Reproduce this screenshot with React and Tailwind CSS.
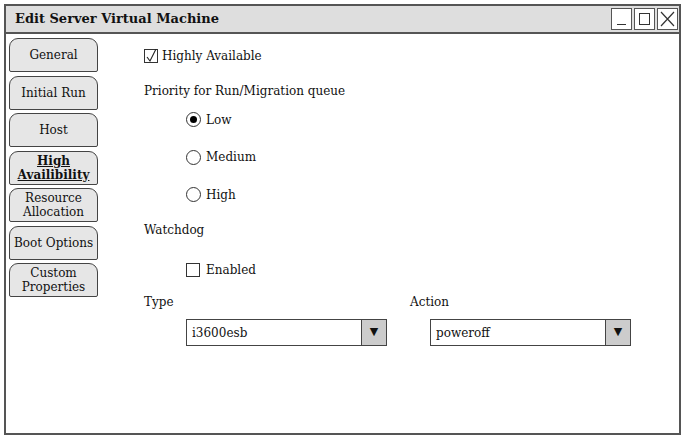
const tabs = [
  ['General'],
  ['Initial Run'],
  ['Host'],
  ['High', 'Availibility'],
  ['Resource', 'Allocation'],
  ['Boot Options'],
  ['Custom', 'Properties'],
];

function Radio({ checked, label }) {
  return (
    <div className="flex items-center gap-[5px] h-[15px]">
      <span className="w-[15px] h-[15px] rounded-full border border-[#333] flex items-center justify-center bg-white">
        {checked && <span className="w-[7px] h-[7px] rounded-full bg-black" />}
      </span>
      <span>{label}</span>
    </div>
  );
}

function Select({ value }) {
  return (
    <div className="flex w-[201px] h-[27px] border border-[#444] bg-white">
      <div className="flex-1 flex items-center pl-[5px]">{value}</div>
      <div className="w-[25px] border-l border-[#444] bg-[#cccccc] flex items-center justify-center text-[11px]">▼</div>
    </div>
  );
}

export default function App() {
  return (
    <div className="w-[682px] h-[436px] bg-white p-[4px] pb-[2px] text-[12px] text-[#111]" style={{ fontFamily: '"DejaVu Serif", serif' }}>
      <div className="w-[677px] h-[431px] border-2 border-[#555] flex flex-col">
        <div className="h-[28px] bg-[#dedede] border-b-2 border-[#555] flex items-center justify-between pl-[9px] pr-[1px]">
          <span className="font-bold text-[13px]">Edit Server Virtual Machine</span>
          <div className="flex gap-[2px]">
            <div className="w-[21px] h-[22px] border border-[#555] bg-white flex items-end justify-center pb-[4px]">
              <span className="w-[9px] h-[1.5px] bg-[#333]" />
            </div>
            <div className="w-[21px] h-[22px] border border-[#555] bg-white flex items-center justify-center">
              <span className="w-[11px] h-[12px] border border-[#333]" />
            </div>
            <div className="w-[21px] h-[22px] border border-[#555] bg-white flex items-center justify-center">
              <svg width="15" height="16" viewBox="0 0 15 16"><path d="M1 1L14 15M14 1L1 15" stroke="#333" strokeWidth="1.2" fill="none" /></svg>
            </div>
          </div>
        </div>
        <div className="flex flex-1">
          <div className="w-[96px] pl-[3px] pt-[4px] flex flex-col gap-[3.5px]">
            {tabs.map((t, i) => (
              <div key={i} className={`w-[89px] h-[34px] border border-[#444] rounded-t-[9px] rounded-b-[2px] bg-[#e6e6e6] flex flex-col items-center justify-center leading-[14px] ${i === 3 ? 'font-bold underline' : ''}`}>
                {t.map((l) => <span key={l}>{l}</span>)}
              </div>
            ))}
          </div>
          <div className="flex-1 pl-[42px] pt-[14px]">
            <div className="flex items-center gap-[4px] h-[15px]">
              <span className="w-[14px] h-[14px] border border-[#333] flex items-center justify-center">
                <svg width="12" height="14" viewBox="0 0 12 14"><path d="M2 8L5 12L11 0" stroke="#222" strokeWidth="1.1" fill="none" /></svg>
              </span>
              <span>Highly Available</span>
            </div>
            <div className="mt-[19px]">Priority for Run/Migration queue</div>
            <div className="ml-[42px] mt-[12px] flex flex-col gap-[22.5px]">
              <Radio checked label="Low" />
              <Radio label="Medium" />
              <Radio label="High" />
            </div>
            <div className="mt-[19px]">Watchdog</div>
            <div className="ml-[42px] mt-[23px] flex items-center gap-[6px] h-[15px]">
              <span className="w-[14px] h-[14px] border border-[#333]" />
              <span>Enabled</span>
            </div>
            <div className="flex mt-[16px]">
              <div className="w-[266px]">
                <div>Type</div>
                <div className="ml-[42px] mt-[8px]"><Select value="i3600esb" /></div>
              </div>
              <div>
                <div>Action</div>
                <div className="ml-[20px] mt-[8px]"><Select value="poweroff" /></div>
              </div>
            </div>
          </div>
        </div>
      </div>
    </div>
  );
}
